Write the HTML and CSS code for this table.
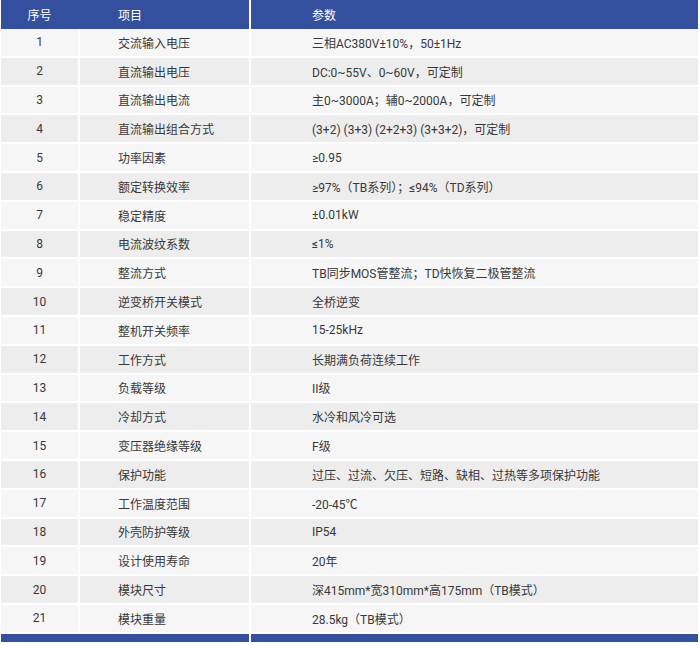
FILE: index.html
```html
<!DOCTYPE html>
<html lang="zh">
<head>
<meta charset="utf-8">
<link rel="stylesheet" href="styles.css">
</head>
<body>
<div class="spec">
  <div class="head">
    <div class="head-left"><span class="c1">序号</span><span class="c2">项目</span></div>
    <div class="head-right"><span class="c3">参数</span></div>
  </div>
  <div class="row"><div class="c1">1</div><div class="c2">交流输入电压</div><div class="c3">三相AC380V±10%，50±1Hz</div></div>
  <div class="row"><div class="c1">2</div><div class="c2">直流输出电压</div><div class="c3">DC:0~55V、0~60V，可定制</div></div>
  <div class="row"><div class="c1">3</div><div class="c2">直流输出电流</div><div class="c3">主0~3000A；辅0~2000A，可定制</div></div>
  <div class="row"><div class="c1">4</div><div class="c2">直流输出组合方式</div><div class="c3">(3+2) (3+3) (2+2+3) (3+3+2)，可定制</div></div>
  <div class="row"><div class="c1">5</div><div class="c2">功率因素</div><div class="c3">≥0.95</div></div>
  <div class="row"><div class="c1">6</div><div class="c2">额定转换效率</div><div class="c3">≥97%（TB系列）；≤94%（TD系列）</div></div>
  <div class="row"><div class="c1">7</div><div class="c2">稳定精度</div><div class="c3">±0.01kW</div></div>
  <div class="row"><div class="c1">8</div><div class="c2">电流波纹系数</div><div class="c3">≤1%</div></div>
  <div class="row"><div class="c1">9</div><div class="c2">整流方式</div><div class="c3">TB同步MOS管整流；TD快恢复二极管整流</div></div>
  <div class="row"><div class="c1">10</div><div class="c2">逆变桥开关模式</div><div class="c3">全桥逆变</div></div>
  <div class="row"><div class="c1">11</div><div class="c2">整机开关频率</div><div class="c3">15-25kHz</div></div>
  <div class="row"><div class="c1">12</div><div class="c2">工作方式</div><div class="c3">长期满负荷连续工作</div></div>
  <div class="row"><div class="c1">13</div><div class="c2">负载等级</div><div class="c3">II级</div></div>
  <div class="row"><div class="c1">14</div><div class="c2">冷却方式</div><div class="c3">水冷和风冷可选</div></div>
  <div class="row"><div class="c1">15</div><div class="c2">变压器绝缘等级</div><div class="c3">F级</div></div>
  <div class="row"><div class="c1">16</div><div class="c2">保护功能</div><div class="c3">过压、过流、欠压、短路、缺相、过热等多项保护功能</div></div>
  <div class="row"><div class="c1">17</div><div class="c2">工作温度范围</div><div class="c3">-20-45℃</div></div>
  <div class="row"><div class="c1">18</div><div class="c2">外壳防护等级</div><div class="c3">IP54</div></div>
  <div class="row"><div class="c1">19</div><div class="c2">设计使用寿命</div><div class="c3">20年</div></div>
  <div class="row"><div class="c1">20</div><div class="c2">模块尺寸</div><div class="c3">深415mm*宽310mm*高175mm（TB模式）</div></div>
  <div class="row"><div class="c1">21</div><div class="c2">模块重量</div><div class="c3">28.5kg（TB模式）</div></div>
  <div class="foot"><div class="foot-left"></div><div class="foot-right"></div></div>
</div>
</body>
</html>
```

FILE: styles.css
```css
html, body {
  margin: 0;
  padding: 0;
  background: #ffffff;
}
body {
  font-family: Roboto, "Noto Sans CJK SC", sans-serif;
  font-size: 12px;
  color: #383838;
}
.spec {
  width: 697px;
  margin-left: 1px;
  display: flex;
  flex-direction: column;
}
.head {
  display: grid;
  grid-template-columns: 248px 1fr;
  column-gap: 2px;
  height: 29px;
  color: #ffffff;
}
.head-left, .head-right {
  background: #344f9d;
  display: grid;
  align-items: center;
}
.head-left {
  grid-template-columns: 77px 1fr;
  column-gap: 2px;
}
.head-right {
  padding-left: 61px;
}
.head .c1 { text-align: center; }
.head .c2 { padding-left: 38px; }
.row {
  display: grid;
  grid-template-columns: 77px 169px 1fr;
  column-gap: 2px;
  height: 26.8px;
  margin-top: 2px;
}
.head + .row { margin-top: 0; }
.row > div {
  display: flex;
  align-items: center;
  background: #f6f6f6;
  white-space: nowrap;
}
.row:nth-child(odd) > div {
  background: #ededed;
}
.row .c1 { justify-content: center; }
.row .c2 { padding-left: 38px; }
.row .c3 { padding-left: 61px; }
.foot {
  display: grid;
  grid-template-columns: 248px 1fr;
  column-gap: 2px;
  height: 8px;
  margin-top: 2px;
}
.foot-left, .foot-right {
  background: #344f9d;
}
```
